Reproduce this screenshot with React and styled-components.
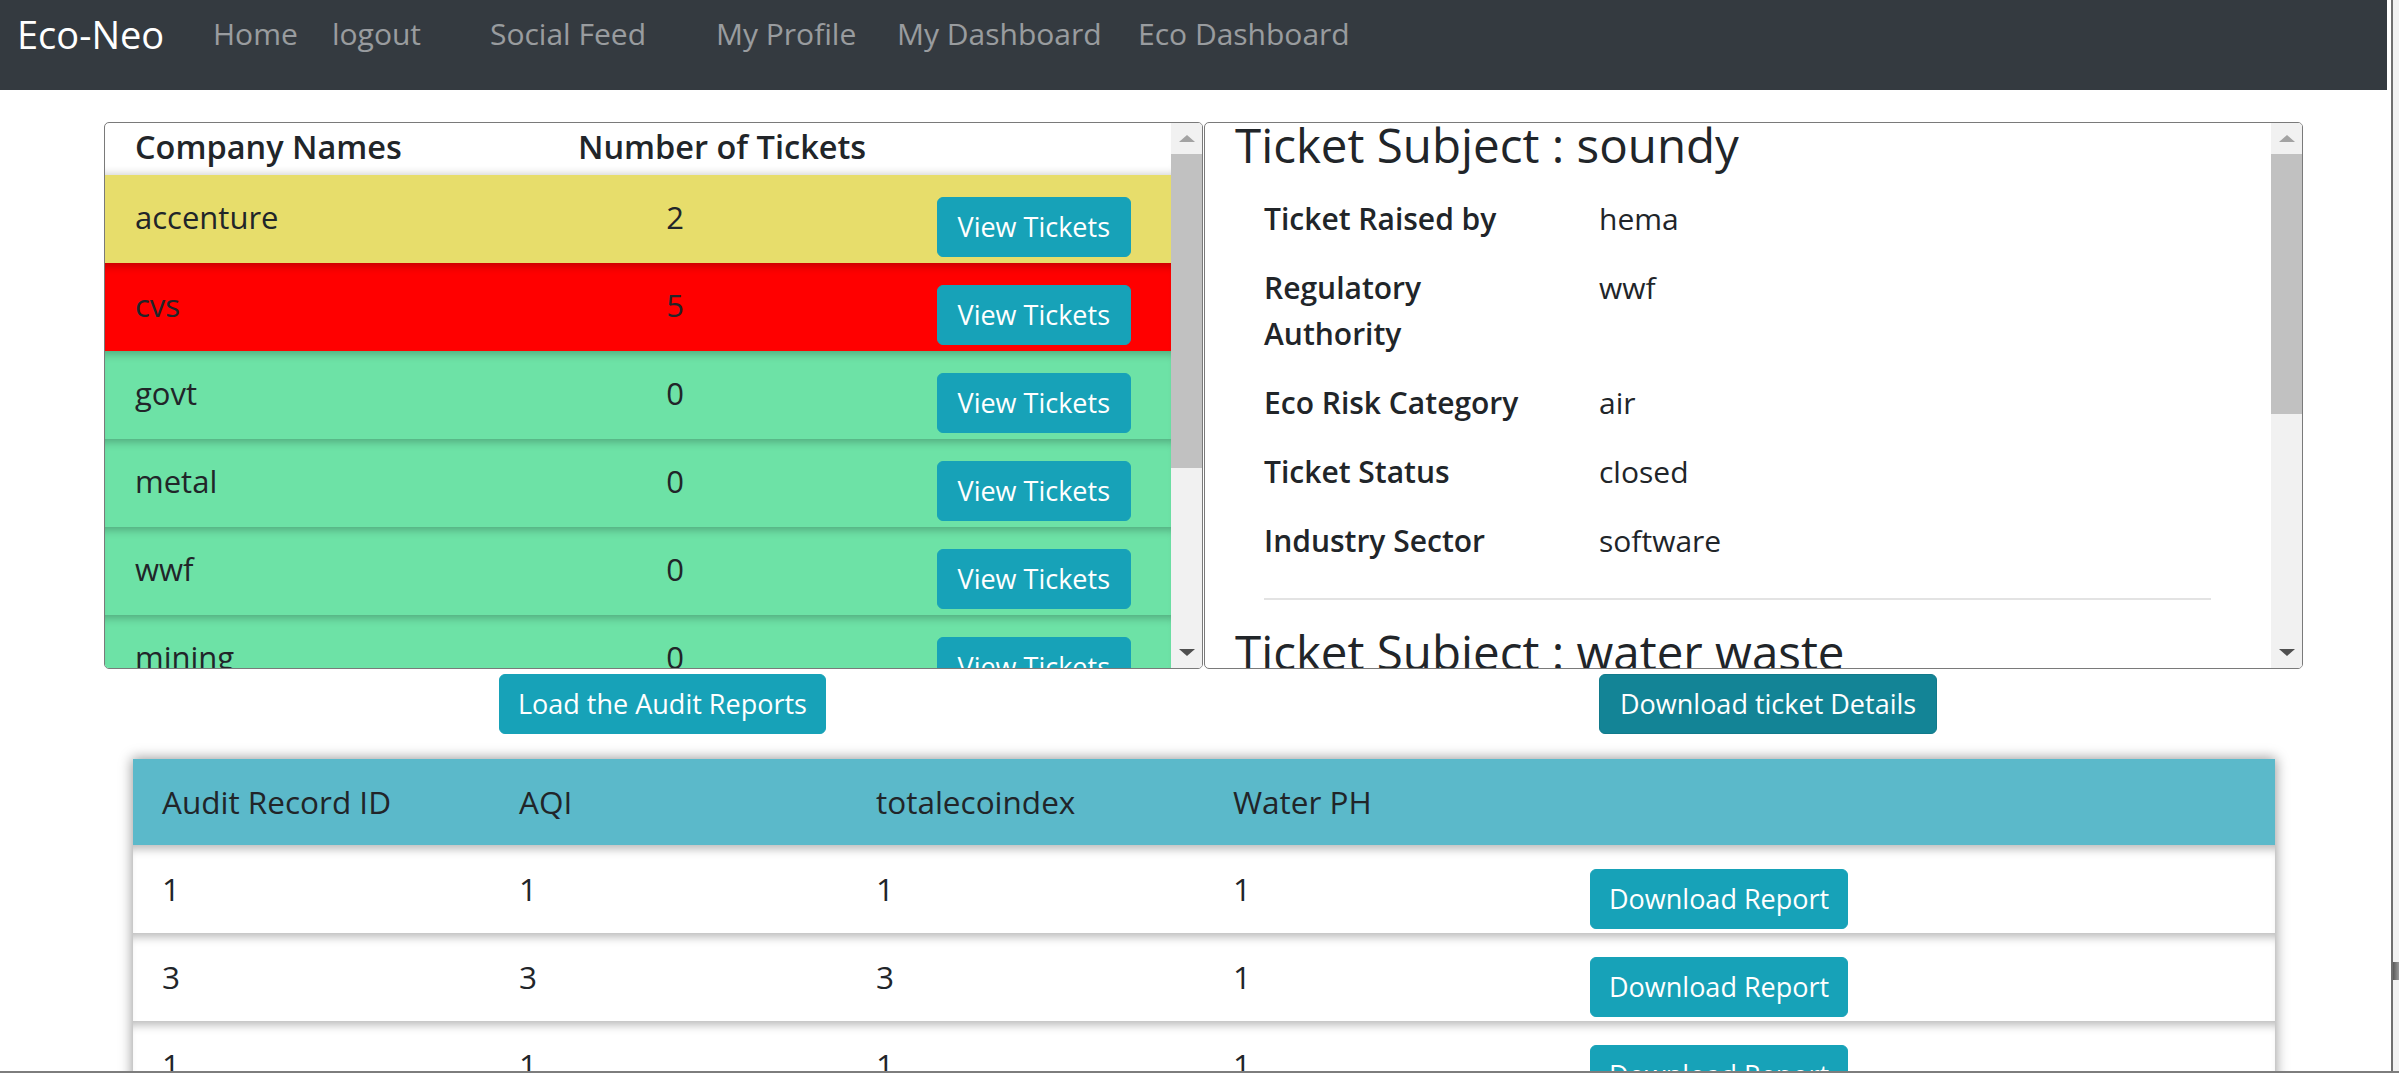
import React from 'react';
import styled, { createGlobalStyle } from 'styled-components';

const GlobalStyle = createGlobalStyle`
  html, body {
    margin: 0;
    padding: 0;
  }
  body {
    font-family: "Open Sans", "Liberation Sans", sans-serif;
    color: #212529;
    background: #fff;
  }
  * {
    box-sizing: border-box;
  }
`;

const Frame = styled.div`
  display: flex;
  height: 1073px;
  overflow: hidden;
  border-bottom: 2px solid #7d7d7d;
`;
const Page = styled.div`
  flex: none;
  width: 2393px;
  border-right: 2px solid #6f6f6f;
  overflow: hidden;
`;
const EdgeStrip = styled.div`
  flex: 1;
  background: #f1f1f1;
  display: flex;
  flex-direction: column;
  justify-content: flex-end;
  padding-bottom: 91px;
`;
const EdgeThumb = styled.div`
  height: 18px;
  background: linear-gradient(to right, #5a5a5a, #9a9a9a);
`;

const Navbar = styled.nav`
  height: 90px;
  margin-right: 4px;
  background: #343a40;
`;
const NavInner = styled.div`
  height: 68px;
  display: flex;
  align-items: center;
  padding-left: 17px;
`;
const Brand = styled.a`
  font-size: 38px;
  line-height: 46px;
  color: #fff;
  width: 196px;
`;
const NavLink = styled.a`
  width: ${({ w }) => (w ? `${w}px` : 'auto')};
  font-size: 30px;
  line-height: 40px;
  color: rgba(255, 255, 255, 0.5);
  white-space: nowrap;
`;

const PanelRow = styled.div`
  display: flex;
  gap: 1px;
  margin-top: 32px;
  padding-left: 104px;
`;
const Panel = styled.div`
  width: 1099px;
  height: 547px;
  display: flex;
  border: 1px solid #7a7a7a;
  border-radius: 5px;
  overflow: hidden;
`;
const PanelBody = styled.div`
  flex: 1;
  overflow: hidden;
`;

const Scrollbar = styled.div`
  flex: none;
  width: 31px;
  display: flex;
  flex-direction: column;
  background: #f1f1f1;
`;
const ArrowBox = styled.div`
  height: 31px;
  display: flex;
  align-items: center;
  justify-content: center;
`;
const Arrow = styled.div`
  width: 0;
  height: 0;
  border-left: 8px solid transparent;
  border-right: 8px solid transparent;
  ${({ down, active }) =>
    down
      ? `border-top: 7px solid ${active ? '#505050' : '#a3a3a3'};`
      : `border-bottom: 7px solid ${active ? '#505050' : '#a3a3a3'};`}
`;
const Thumb = styled.div`
  height: ${({ h }) => h}px;
  background: #c1c1c1;
`;
const Track = styled.div`
  flex: 1;
`;

function ScrollBar({ thumb }) {
  return (
    <Scrollbar>
      <ArrowBox>
        <Arrow />
      </ArrowBox>
      <Thumb h={thumb} />
      <Track />
      <ArrowBox>
        <Arrow down active />
      </ArrowBox>
    </Scrollbar>
  );
}

/* company list */
const ListHeader = styled.div`
  height: 52px;
  display: flex;
  align-items: center;
  padding: 0 0 5px 30px;
  font-size: 32.5px;
  font-weight: 600;
  box-shadow: inset 0 -8px 8px -7px rgba(0, 0, 0, 0.2);
`;
const HeaderCell = styled.div`
  width: ${({ w }) => (w ? `${w}px` : 'auto')};
  white-space: nowrap;
`;
const CompanyRow = styled.div`
  height: 88px;
  display: flex;
  align-items: flex-start;
  padding: 20px 40px 0 30px;
  background: ${({ tone }) => tone};
  box-shadow: ${({ first }) =>
    first ? 'none' : 'inset 0 9px 9px -6px rgba(0, 0, 0, 0.25)'};
`;
const NameCell = styled.div`
  width: 510px;
  font-size: 31px;
  line-height: 44px;
`;
const CountCell = styled.div`
  width: 60px;
  text-align: center;
  font-size: 31px;
  line-height: 44px;
`;
const Button = styled.button`
  margin-top: ${({ mt }) => mt || 0}px;
  margin-left: ${({ push }) => (push ? 'auto' : '0')};
  padding: 9px ${({ px }) => px || 18}px;
  font-family: inherit;
  font-size: 27px;
  line-height: 40px;
  color: #fff;
  background: ${({ dark }) => (dark ? '#138496' : '#17a2b8')};
  border: 1px solid ${({ dark }) => (dark ? '#117a8b' : '#17a2b8')};
  border-radius: 6px;
  white-space: nowrap;
`;

/* ticket details */
const TicketBody = styled(PanelBody)`
  padding-left: 30px;
`;
const Ticket = styled.div`
  padding-top: ${({ first }) => (first ? 0 : 24)}px;
  margin-top: ${({ first }) => (first ? -6 : 0)}px;
`;
const Subject = styled.h3`
  margin: 0;
  font-size: 47.5px;
  font-weight: 400;
  line-height: 55px;
  white-space: nowrap;
`;
const Details = styled.div`
  margin: 12px 0 0 29px;
`;
const DetailRow = styled.div`
  display: flex;
  padding: 11.5px 0;
  font-size: 30px;
  line-height: 46px;
`;
const Label = styled.div`
  width: 335px;
  padding-right: 50px;
  font-weight: 600;
`;
const Value = styled.div``;
const Divider = styled.hr`
  width: 947px;
  margin: 23px 0 0 29px;
  border: 0;
  border-top: 2px solid #e3e3e3;
`;

const ActionRow = styled.div`
  display: flex;
  gap: 1px;
  margin-top: 5px;
  padding-left: 104px;
`;
const ActionCell = styled.div`
  width: 1099px;
  padding-left: 395px;
`;

/* audit table */
const AuditTable = styled.div`
  width: 2142px;
  margin: 25px 0 0 133px;
  box-shadow: 0 0 12px 1px rgba(0, 0, 0, 0.4);
`;
const AuditHead = styled.div`
  height: 86px;
  display: flex;
  align-items: center;
  background: #5bb9ca;
`;
const AuditRow = styled.div`
  height: 88px;
  display: flex;
  align-items: flex-start;
  padding-top: 22px;
  background: #fff;
  box-shadow: inset 0 10px 10px -6px rgba(0, 0, 0, 0.28);
`;
const Cell = styled.div`
  width: 357px;
  padding-left: 29px;
  font-size: 31.5px;
  line-height: 44px;
  white-space: nowrap;
`;

const companies = [
  { name: 'accenture', count: 2, tone: '#e7dd6b' },
  { name: 'cvs', count: 5, tone: '#ff0000' },
  { name: 'govt', count: 0, tone: '#6de2a6' },
  { name: 'metal', count: 0, tone: '#6de2a6' },
  { name: 'wwf', count: 0, tone: '#6de2a6' },
  { name: 'mining', count: 0, tone: '#6de2a6' },
];

const tickets = [
  {
    subject: 'soundy',
    raisedBy: 'hema',
    authority: 'wwf',
    category: 'air',
    status: 'closed',
    sector: 'software',
  },
  {
    subject: 'water waste',
    raisedBy: 'hema',
    authority: 'wwf',
    category: 'water',
    status: 'open',
    sector: 'mining',
  },
];

const audits = [
  { id: 1, aqi: 1, eco: 1, ph: 1 },
  { id: 3, aqi: 3, eco: 3, ph: 1 },
  { id: 1, aqi: 1, eco: 1, ph: 1 },
];

export default function App() {
  return (
    <>
      <GlobalStyle />
      <Frame>
        <Page>
          <Navbar>
            <NavInner>
              <Brand>Eco-Neo</Brand>
              <NavLink w={119}>Home</NavLink>
              <NavLink w={158}>logout</NavLink>
              <NavLink w={226}>Social Feed</NavLink>
              <NavLink w={181}>My Profile</NavLink>
              <NavLink w={241}>My Dashboard</NavLink>
              <NavLink>Eco Dashboard</NavLink>
            </NavInner>
          </Navbar>

          <PanelRow>
            <Panel>
              <PanelBody>
                <ListHeader>
                  <HeaderCell w={443}>Company Names</HeaderCell>
                  <HeaderCell>Number of Tickets</HeaderCell>
                </ListHeader>
                {companies.map((c, i) => (
                  <CompanyRow key={c.name} tone={c.tone} first={i === 0}>
                    <NameCell>{c.name}</NameCell>
                    <CountCell>{c.count}</CountCell>
                    <Button push mt={2} px={20}>View Tickets</Button>
                  </CompanyRow>
                ))}
              </PanelBody>
              <ScrollBar thumb={314} />
            </Panel>

            <Panel>
              <TicketBody>
                {tickets.map((t, i) => (
                  <Ticket key={t.subject} first={i === 0}>
                    <Subject>Ticket Subject : {t.subject}</Subject>
                    <Details>
                      <DetailRow>
                        <Label>Ticket Raised by</Label>
                        <Value>{t.raisedBy}</Value>
                      </DetailRow>
                      <DetailRow>
                        <Label>Regulatory Authority</Label>
                        <Value>{t.authority}</Value>
                      </DetailRow>
                      <DetailRow>
                        <Label>Eco Risk Category</Label>
                        <Value>{t.category}</Value>
                      </DetailRow>
                      <DetailRow>
                        <Label>Ticket Status</Label>
                        <Value>{t.status}</Value>
                      </DetailRow>
                      <DetailRow>
                        <Label>Industry Sector</Label>
                        <Value>{t.sector}</Value>
                      </DetailRow>
                    </Details>
                    <Divider />
                  </Ticket>
                ))}
              </TicketBody>
              <ScrollBar thumb={260} />
            </Panel>
          </PanelRow>

          <ActionRow>
            <ActionCell>
              <Button>Load the Audit Reports</Button>
            </ActionCell>
            <ActionCell>
              <Button dark px={20}>Download ticket Details</Button>
            </ActionCell>
          </ActionRow>

          <AuditTable>
            <AuditHead>
              <Cell>Audit Record ID</Cell>
              <Cell>AQI</Cell>
              <Cell>totalecoindex</Cell>
              <Cell>Water PH</Cell>
              <Cell />
              <Cell />
            </AuditHead>
            {audits.map((a, i) => (
              <AuditRow key={i}>
                <Cell>{a.id}</Cell>
                <Cell>{a.aqi}</Cell>
                <Cell>{a.eco}</Cell>
                <Cell>{a.ph}</Cell>
                <Cell>
                  <Button mt={2}>Download Report</Button>
                </Cell>
                <Cell />
              </AuditRow>
            ))}
          </AuditTable>
        </Page>
        <EdgeStrip>
          <EdgeThumb />
        </EdgeStrip>
      </Frame>
    </>
  );
}
